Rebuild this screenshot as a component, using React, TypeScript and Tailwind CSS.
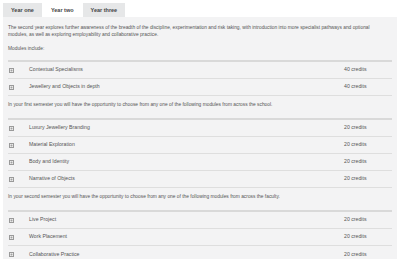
import React from "react";

type Module = { name: string; credits: string };

const core: Module[] = [
  { name: "Contextual Specialisms", credits: "40 credits" },
  { name: "Jewellery and Objects in depth", credits: "40 credits" },
];

const school: Module[] = [
  { name: "Luxury Jewellery Branding", credits: "20 credits" },
  { name: "Material Exploration", credits: "20 credits" },
  { name: "Body and Identity", credits: "20 credits" },
  { name: "Narrative of Objects", credits: "20 credits" },
];

const faculty: Module[] = [
  { name: "Live Project", credits: "20 credits" },
  { name: "Work Placement", credits: "20 credits" },
  { name: "Collaborative Practice", credits: "20 credits" },
];

function PlusBox() {
  return (
    <svg width="5" height="5" viewBox="0 0 5 5" className="shrink-0">
      <rect x="0.5" y="0.5" width="4" height="4" fill="#e9e9e9" stroke="#9a9a9a" strokeWidth="1" />
      <path d="M2.5 1.5v2M1.5 2.5h2" stroke="#9a9a9a" strokeWidth="0.7" />
    </svg>
  );
}

// last table runs into the bottom of the panel, so its last row has no border
function ModuleTable({ items, last }: { items: Module[]; last?: boolean }) {
  return (
    <div className="border-t-2 border-[#d9d9d9]">
      {items.map((m, i) => (
        <div
          key={m.name}
          className={`flex items-center h-[17px] ${last && i === items.length - 1 ? "" : "border-b border-[#dedede]"}`}
        >
          <div className="w-[21px] pl-[1px] flex items-center">
            <PlusBox />
          </div>
          <div className="flex-1 text-[5.2px] text-[#555]">{m.name}</div>
          <div className="w-[48px] text-[5.2px] text-[#555]">{m.credits}</div>
        </div>
      ))}
    </div>
  );
}

export default function App() {
  const tabs = ["Year one", "Year two", "Year three"];
  return (
    <div className="w-[400px] h-[270px] bg-white pt-[3px] px-[3px]" style={{ fontFamily: '"Liberation Sans", Arial, sans-serif' }}>
      <div className="flex gap-px">
        {tabs.map((t, i) => (
          <div
            key={t}
            className={`h-[14px] px-[8px] flex items-center text-[5.5px] font-semibold text-[#444] ${i === 1 ? "bg-white" : "bg-[#e6e7e8]"}`}
          >
            {t}
          </div>
        ))}
      </div>
      <div className="bg-[#f3f3f4] px-[5px] pt-[7px] h-[242px] overflow-hidden">
        <p className="max-w-[372px] text-[4.85px] leading-[7px] text-[#555]">
          The second year explores further awareness of the breadth of the discipline, experimentation and risk taking, with introduction into more specialist pathways and optional modules, as well as exploring employability and collaborative practice.
        </p>
        <p className="text-[4.85px] leading-[7px] text-[#555] mt-[7px] mb-[8px]">Modules include:</p>
        <ModuleTable items={core} />
        <p className="pt-[5px] pb-[10px] text-[4.85px] leading-[7px] text-[#555]">
          In your first semester you will have the opportunity to choose from any one of the following modules from across the school.
        </p>
        <ModuleTable items={school} />
        <p className="pt-[5px] pb-[10px] text-[4.85px] leading-[7px] text-[#555]">
          In your second semester you will have the opportunity to choose from any one of the following modules from across the faculty.
        </p>
        <ModuleTable items={faculty} last />
      </div>
    </div>
  );
}
